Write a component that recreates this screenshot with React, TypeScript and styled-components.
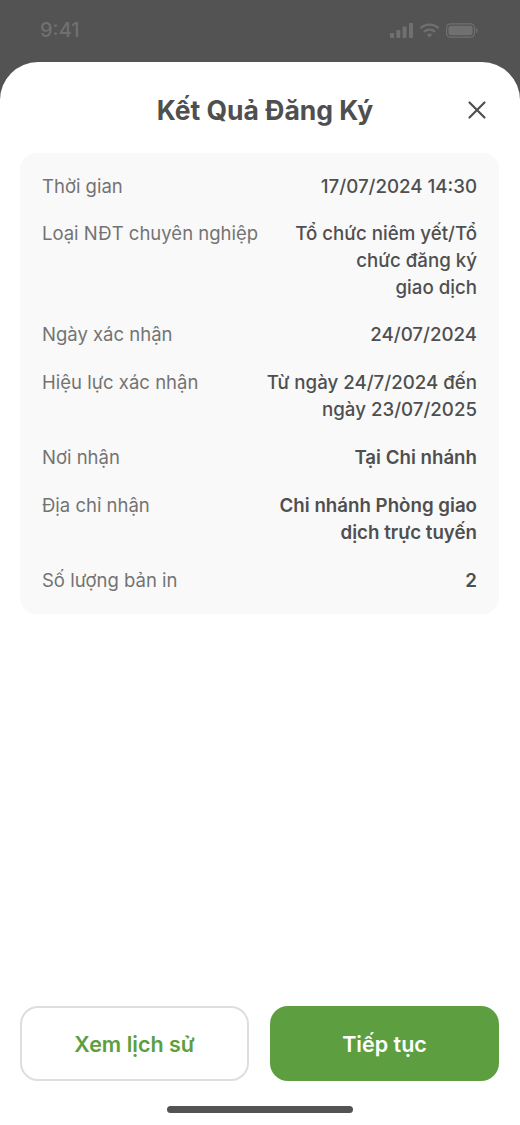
import React from 'react';
import styled, { createGlobalStyle } from 'styled-components';

const GlobalStyle = createGlobalStyle`
  html, body {
    margin: 0;
    padding: 0;
    background: #535353;
  }
  body {
    font-family: Inter, "Noto Sans", sans-serif;
  }
`;

const Screen = styled.div`
  width: 520px;
  height: 1125px;
  background: #535353;
  display: flex;
  flex-direction: column;
  overflow: hidden;
`;

const StatusBar = styled.div`
  height: 62px;
  flex-shrink: 0;
  padding: 0 42px 2px 40px;
  box-sizing: border-box;
  display: flex;
  align-items: center;
  justify-content: space-between;
`;

const Clock = styled.span`
  font-size: 20px;
  font-weight: 500;
  color: #707070;
`;

const StatusIcons = styled.div`
  display: flex;
  align-items: center;
  gap: 6px;
`;

const Sheet = styled.div`
  flex: 1;
  background: #ffffff;
  border-radius: 38px 38px 0 0;
  padding: 0 21px 0 20px;
  display: flex;
  flex-direction: column;
`;

const Header = styled.div`
  height: 91px;
  flex-shrink: 0;
  position: relative;
  display: flex;
  align-items: center;
  justify-content: center;
`;

const Title = styled.h1`
  margin: 4px 0 0 11px;
  font-size: 26.5px;
  line-height: 32px;
  font-weight: 700;
  color: #4f4f4f;
`;

const CloseButton = styled.button`
  position: absolute;
  right: 10px;
  top: 36px;
  width: 24px;
  height: 24px;
  padding: 0;
  border: 0;
  background: transparent;
  display: flex;
`;

const InfoCard = styled.div`
  background: #f9f9f9;
  border-radius: 16px;
  padding: 20px 22px;
  display: flex;
  flex-direction: column;
  gap: 21px;
`;

const Row = styled.div`
  display: flex;
  justify-content: space-between;
  gap: 16px;

  &:nth-child(-n + 2) {
    margin-bottom: -1px;
  }
`;

const Label = styled.span`
  font-size: 18.5px;
  line-height: 27px;
  color: #737373;
  white-space: nowrap;
`;

const Value = styled.span<{ $bold?: boolean }>`
  font-size: 18.7px;
  line-height: 27px;
  font-weight: ${({ $bold }) => ($bold ? 600 : 500)};
  color: #4f4f4f;
  text-align: right;
  white-space: pre-line;
`;

const Footer = styled.div`
  margin-top: auto;
  display: grid;
  grid-template-columns: 1fr 1fr;
  gap: 21px;
`;

const ActionButton = styled.button<{ $primary?: boolean }>`
  height: 75px;
  border-radius: 18px;
  box-sizing: border-box;
  border: ${({ $primary }) => ($primary ? '0' : '2px solid #dedede')};
  background: ${({ $primary }) => ($primary ? '#5d9e40' : '#ffffff')};
  color: ${({ $primary }) => ($primary ? '#ffffff' : '#5d9e40')};
  font-family: inherit;
  font-size: 21.5px;
  font-weight: 600;
`;

const HomeBar = styled.div`
  height: 44px;
  flex-shrink: 0;
  display: flex;
  align-items: flex-end;
  justify-content: center;
  padding-bottom: 12px;
  box-sizing: border-box;
`;

const HomeIndicator = styled.div`
  width: 186px;
  height: 7px;
  border-radius: 4px;
  background: #535353;
`;

const rows = [
  { label: 'Thời gian', value: '17/07/2024 14:30' },
  { label: 'Loại NĐT chuyên nghiệp', value: 'Tổ chức niêm yết/Tổ\nchức đăng ký\ngiao dịch' },
  { label: 'Ngày xác nhận', value: '24/07/2024' },
  { label: 'Hiệu lực xác nhận', value: 'Từ ngày 24/7/2024 đến\nngày 23/07/2025' },
  { label: 'Nơi nhận', value: 'Tại Chi nhánh', bold: true },
  { label: 'Địa chỉ nhận', value: 'Chi nhánh Phòng giao\ndịch trực tuyến', bold: true },
  { label: 'Số lượng bản in', value: '2', bold: true },
];

const App: React.FC = () => {
  return (
    <Screen>
      <GlobalStyle />
      <StatusBar>
        <Clock>9:41</Clock>
        <StatusIcons>
          <svg width="23" height="15" viewBox="0 0 23 15" fill="#707070">
            <rect x="0" y="10" width="4" height="5" rx="1" />
            <rect x="6.300" y="7" width="4" height="8" rx="1" />
            <rect x="12.600" y="3.500" width="4" height="11.500" rx="1" />
            <rect x="19" y="0" width="4" height="15" rx="1" />
          </svg>
          <svg width="21" height="15" viewBox="0 0 21 15" fill="none" stroke="#707070" strokeWidth="2.4">
            <path d="M1.500 5.200C6.600.4 14.400.4 19.500 5.200" />
            <path d="M5 8.800c3.200-2.900 7.800-2.900 11 0" />
            <path d="M10.500 14.400l-2.700-2.900c1.600-1.200 3.800-1.200 5.400 0z" fill="#707070" stroke="none" />
          </svg>
          <svg width="32" height="15" viewBox="0 0 33 15" fill="none">
            <rect x="0.600" y="0.600" width="28.800" height="13.800" rx="4" stroke="#707070" strokeWidth="1.2" />
            <rect x="2.500" y="2.500" width="25" height="10" rx="2.400" fill="#707070" />
            <path d="M31 5v5c1-.3 1.600-1.300 1.600-2.500S32 5.300 31 5z" fill="#707070" />
          </svg>
        </StatusIcons>
      </StatusBar>
      <Sheet>
        <Header>
          <Title>Kết Quả Đăng Ký</Title>
          <CloseButton aria-label="Đóng">
            <svg width="24" height="24" viewBox="0 0 24 24" fill="none" stroke="#4f4f4f" strokeWidth="2.2" strokeLinecap="round">
              <path d="M4.500 4.500l15 15M19.500 4.500l-15 15" />
            </svg>
          </CloseButton>
        </Header>
        <InfoCard>
          {rows.map((row) => (
            <Row key={row.label}>
              <Label>{row.label}</Label>
              <Value $bold={row.bold}>{row.value}</Value>
            </Row>
          ))}
        </InfoCard>
        <Footer>
          <ActionButton>Xem lịch sử</ActionButton>
          <ActionButton $primary>Tiếp tục</ActionButton>
        </Footer>
        <HomeBar>
          <HomeIndicator />
        </HomeBar>
      </Sheet>
    </Screen>
  );
};

export default App;
